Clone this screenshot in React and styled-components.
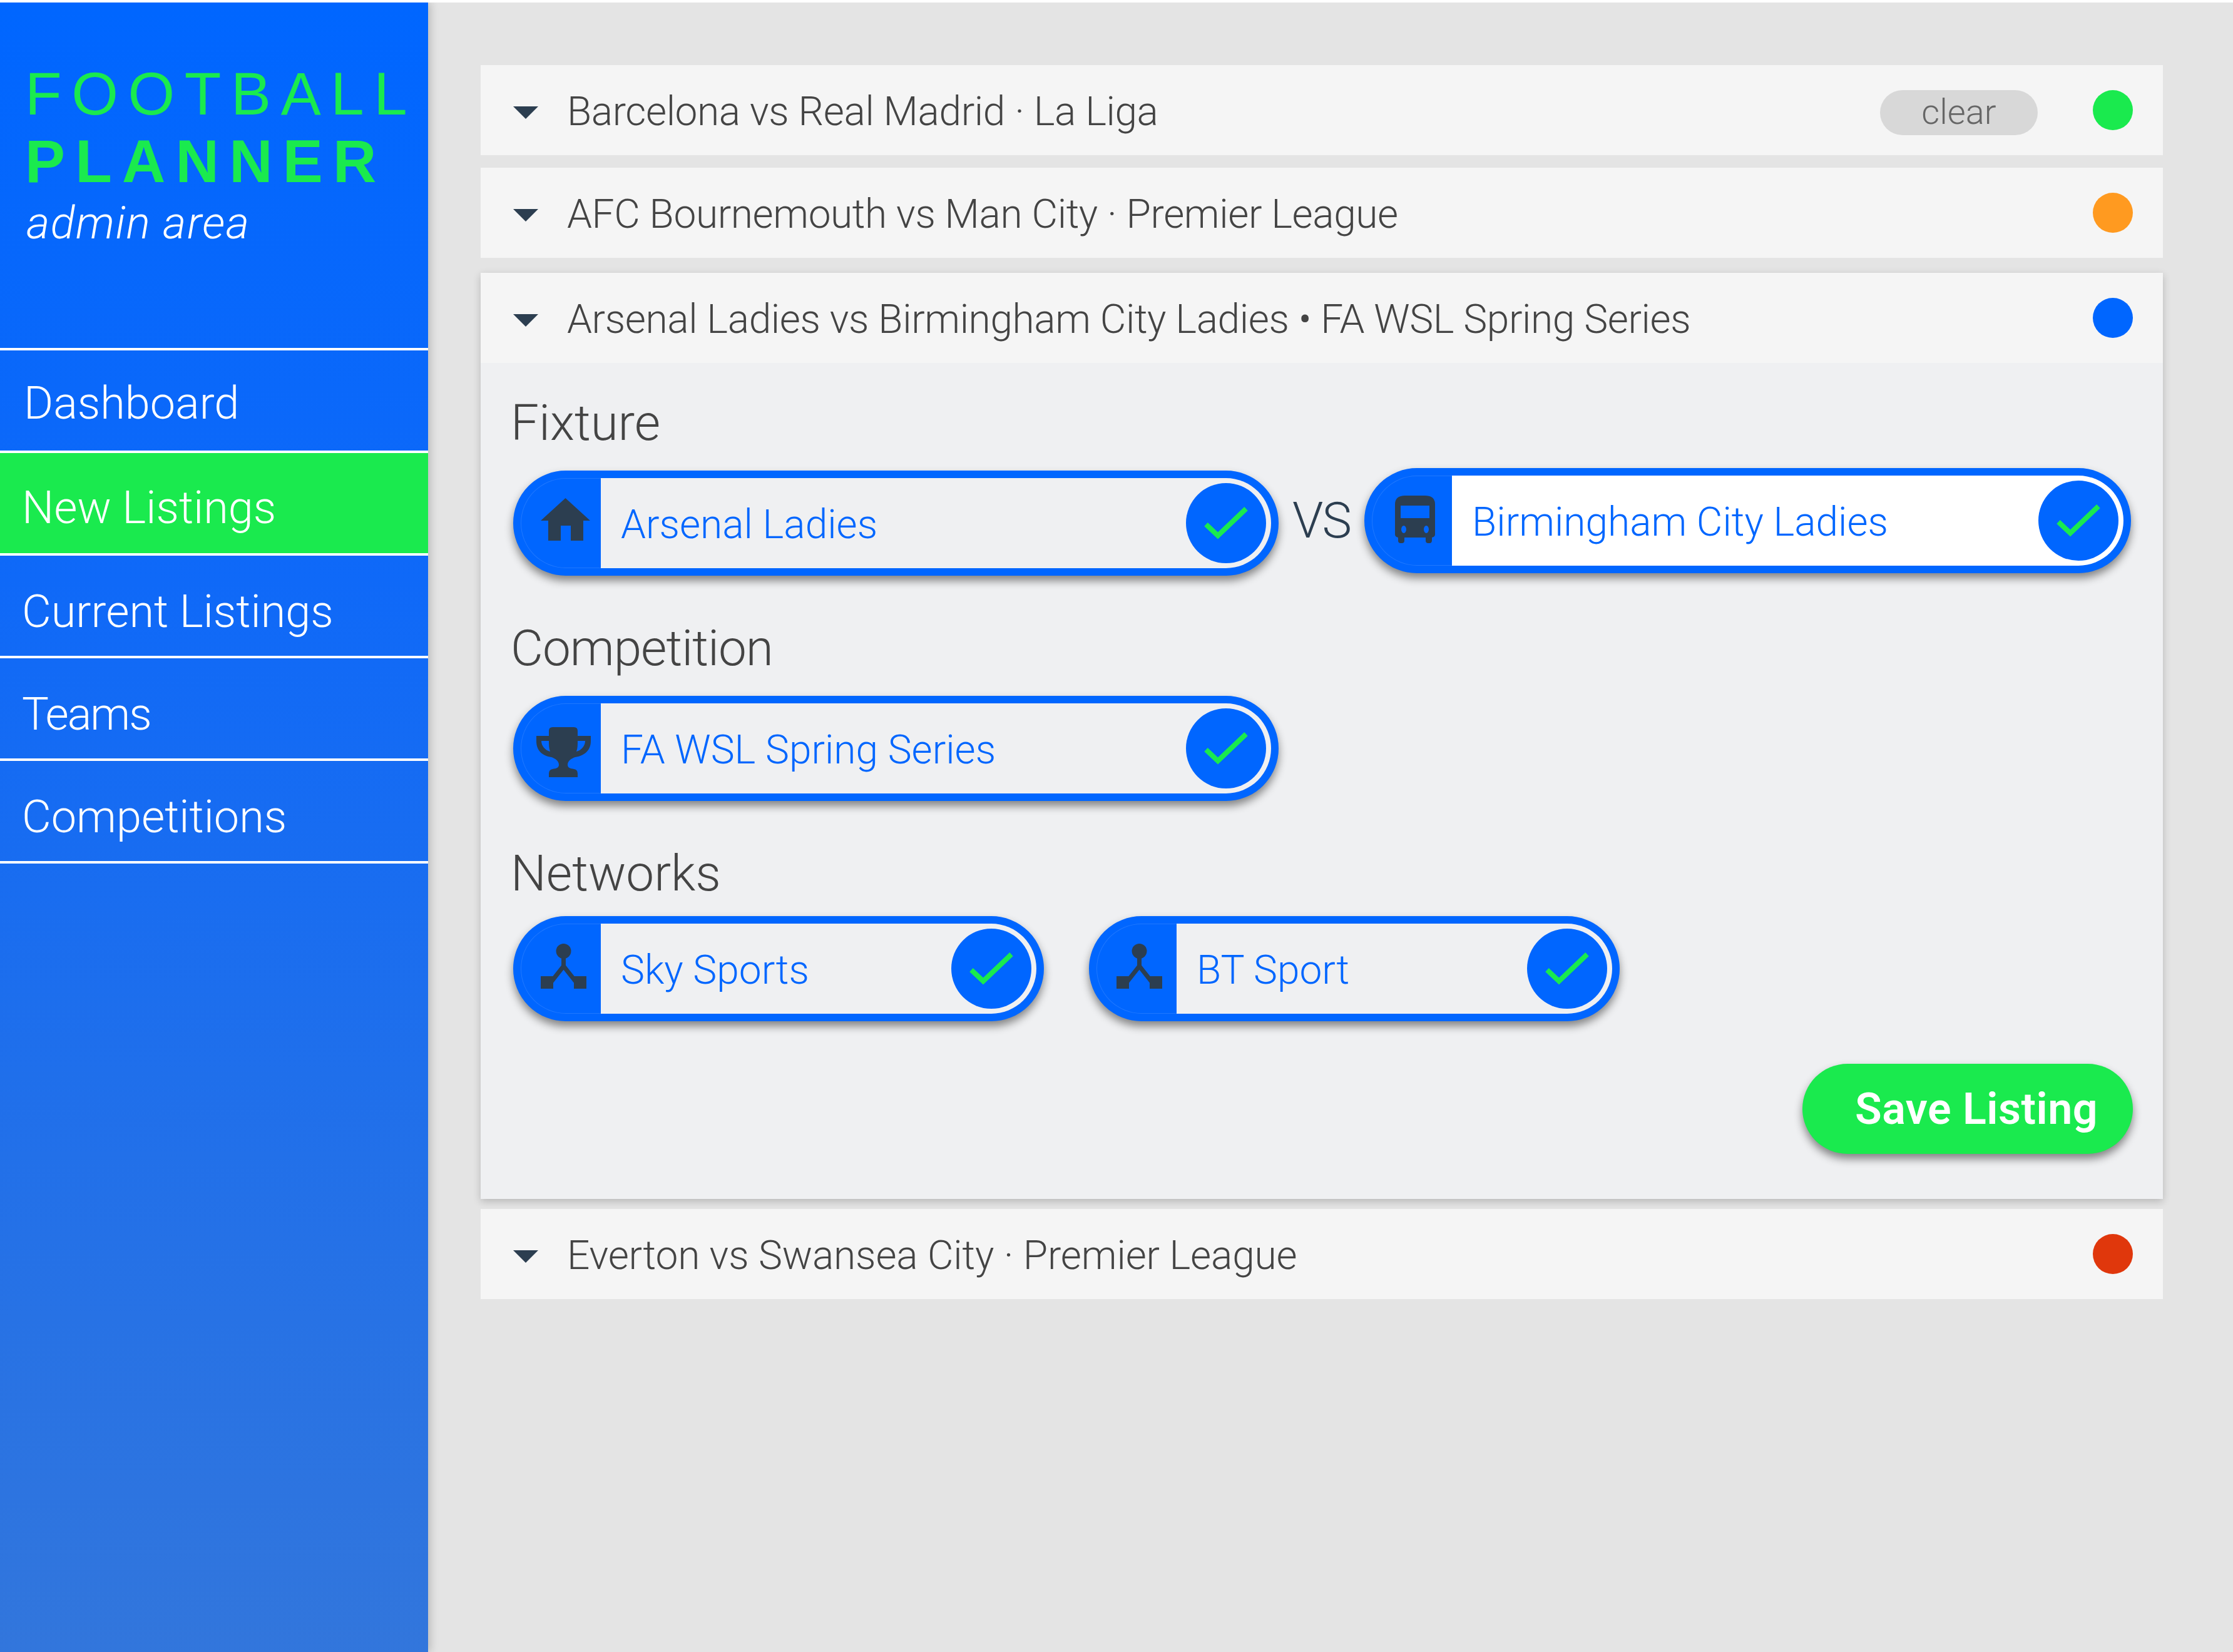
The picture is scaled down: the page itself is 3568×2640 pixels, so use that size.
import React from "react";
import styled, { createGlobalStyle } from "styled-components";

const Global = createGlobalStyle`
  html, body { margin: 0; padding: 0; background: #fff; }
  * { box-sizing: border-box; }
`;
const BLUE = "#0066ff";
const GREEN = "#1aea4e";
const DARK = "#2c3e50";
const FONT = `"Roboto", "Liberation Sans", sans-serif`;

const Page = styled.div`
  margin-top: 4px; height: 2636px; display: flex; background: #e4e4e4; font-family: ${FONT}; overflow: hidden;
`;
const Sidebar = styled.aside`
  width: 684px; flex: none; background: linear-gradient(180deg, #0066ff 0%, #0f69f8 35%, #3276dc 100%);
  box-shadow: 4px 0 12px rgba(0,0,0,.18);
`;
const Brand = styled.div`
  height: 552px; padding: 91px 0 0 40px;
`;
const BrandTop = styled.div`
  font: 400 96px/110px "Liberation Sans", sans-serif; color: ${GREEN}; letter-spacing: 15.6px; white-space: nowrap;
`;
const BrandBottom = styled.div`
  font: 700 96px/106px "Liberation Sans", sans-serif; color: ${GREEN}; letter-spacing: 16.2px;
`;
const BrandSub = styled.div`
  font: italic 300 72px/80px ${FONT}; color: #fff; margin-left: 2px; margin-top: 6px; letter-spacing: 1.4px;
`;
const NavItem = styled.div`
  height: 164px; border-top: 4px solid #fff; display: flex; align-items: center;
  padding: ${p => p.$top}px 0 0 ${p => p.$pad}px; font-size: 72px; font-weight: 300; color: #fff;
  letter-spacing: ${p => p.$ls || 0}px;
  background: ${p => (p.$active ? GREEN : "transparent")};
`;
const NavEnd = styled.div`border-top: 4px solid #fff;`;
const Main = styled.main`
  flex: 1; padding: 100px 112px 0 84px;
`;
const Row = styled.div`
  height: 144px; margin-top: ${p => p.$mt || 0}px; background: #f5f5f5; display: flex; align-items: center;
  padding: 0 48px 0 52px; font-size: 64px; font-weight: 300; color: #444;
`;
const Caret = styled.span`
  width: 0; height: 0; border-left: 20px solid transparent; border-right: 20px solid transparent;
  border-top: 20px solid ${DARK}; margin-right: 46px; margin-top: 8px;
`;
const RowText = styled.span`flex: 1; white-space: nowrap; letter-spacing: ${p => p.$ls ?? -0.4}px; margin-top: 4px;`;
const Clear = styled.span`
  width: 252px; height: 72px; border-radius: 36px; background: #d8d8d8; color: #666; font-size: 56px;
  display: flex; align-items: center; justify-content: center; margin-right: 88px; margin-top: 8px; padding-bottom: 2px;
`;
const Dot = styled.span`
  width: 64px; height: 64px; border-radius: 50%; background: ${p => p.$c};
`;
const Panel = styled.section`
  margin-top: 24px; background: #eff0f2; box-shadow: 0 4px 12px rgba(0,0,0,.2); height: 1480px;
`;
const PanelBody = styled.div`
  padding: 48px 48px 0 52px; display: flex; flex-direction: column;
`;
const Label = styled.div`
  font-size: 80px; line-height: 96px; font-weight: 300; color: #444; margin: ${p => p.$mt}px 0 0 -4px; height: ${p => p.$h}px;
  letter-spacing: ${p => p.$ls || 0}px;
`;
const PillRow = styled.div`
  display: flex; gap: ${p => p.$gap || 0}px;
`;
const Pill = styled.div`
  width: ${p => p.$w}px; height: 168px; border-radius: 84px; background: ${BLUE}; border: 12px solid ${BLUE};
  display: flex; box-shadow: 0 8px 14px rgba(0,0,0,.45); flex: none;
  position: relative; top: ${p => p.$shift || 0}px;
`;
const IconSlot = styled.div`
  width: 128px; flex: none; border: 1px solid rgba(255,255,255,.12); border-right: 0; border-radius: 72px 0 0 72px;
  display: flex; align-items: center; justify-content: center;
`;
const Glyph = styled.span`
  display: flex; margin: ${p => p.$dy * 2}px 0 0 ${p => p.$dx * 2}px;
`;
const PillBody = styled.div`
  flex: 1; background: ${p => (p.$white ? "#fff" : "#eff0f2")}; border-radius: 0 72px 72px 0;
  display: flex; align-items: center; justify-content: space-between; padding: 0 8px 0 32px;
  color: ${BLUE}; font-size: 64px; font-weight: 300; white-space: nowrap;
`;
const PillText = styled.span`margin-top: 4px;`;
const Tick = styled.div`
  width: 128px; height: 128px; border-radius: 50%; background: ${BLUE};
  display: flex; align-items: center; justify-content: center;
`;
const Vs = styled.div`
  width: 137px; flex: none; align-self: center; margin-bottom: 8px; text-align: center;
  font-size: 80px; font-weight: 300; color: ${DARK}; letter-spacing: -2px;
`;
const Footer = styled.div`
  display: flex; justify-content: flex-end; margin-top: 68px;
`;
const Save = styled.div`
  width: 528px; height: 144px; border-radius: 72px; background: ${GREEN}; color: #fff; font-size: 70px; font-weight: 600;
  padding-left: 84px; display: flex; align-items: center; box-shadow: 0 8px 14px rgba(0,0,0,.45); white-space: nowrap; letter-spacing: .5px;
`;

const Check = () => (
  <svg width="70" height="52" viewBox="0 0 70 52"><path d="M3 28 L22 46 L67 3" fill="none" stroke={GREEN} strokeWidth="8" /></svg>
);
const House = () => (
  <svg width="79" height="68" viewBox="0 0 79 68"><path fill={DARK} d="M39.5 0 L79 36 H68 V68 H48 V44 H32 V68 H12 V36 H0 Z" /></svg>
);
const Trophy = () => (
  <svg width="87" height="80" viewBox="0 0 87 80">
    <path fill={DARK} d="M20 6 Q20 0 26 0 H60 Q66 0 66 6 V14 H87 V22 C87 38 76 46 62 48 C56 50 50 54 50 60 C50 65 54 66 60 67 Q66 68 66 74 V80 H20 V74 Q20 68 26 67 C32 66 36 65 36 60 C36 54 30 50 24 48 C10 46 0 38 0 22 V14 H20 Z M8 22 C8 30 14 37 22 39 C20 34 20 28 20 22 Z M78 22 H66 C66 28 66 34 64 39 C72 37 78 30 78 22 Z" fillRule="evenodd" />
  </svg>
);
const Bus = () => (
  <svg width="64" height="76" viewBox="0 0 64 76">
    <path fill={DARK} fillRule="evenodd" d="M16 0 H48 Q64 0 64 14 V62 Q64 66 59 67 V72 Q59 76 55 76 H53 Q49 76 49 72 V67 H15 V72 Q15 76 11 76 H9 Q5 76 5 72 V67 Q0 66 0 62 V14 Q0 0 16 0 Z M9 16 V36 H55 V16 Z M14 48 A4 6 0 1 0 14 60 A4 6 0 1 0 14 48 Z M50 48 A4 6 0 1 0 50 60 A4 6 0 1 0 50 48 Z" />
  </svg>
);
const Net = () => (
  <svg width="73" height="72" viewBox="0 0 73 72">
    <ellipse cx="36.5" cy="12" rx="12" ry="12" fill={DARK} />
    <path d="M36.5 20 V36 M36.5 36 L16 62 M36.5 36 L57 62" stroke={DARK} strokeWidth="7" fill="none" />
    <rect x="0" y="52" width="20" height="20" fill={DARK} />
    <rect x="53" y="52" width="20" height="20" fill={DARK} />
  </svg>
);

const PillItem = ({ w, icon, dx, dy, text, white, shift }) => (
  <Pill $w={w} $shift={shift}>
    <IconSlot><Glyph $dx={dx} $dy={dy}>{icon}</Glyph></IconSlot>
    <PillBody $white={white}>
      <PillText>{text}</PillText>
      <Tick><Check /></Tick>
    </PillBody>
  </Pill>
);

const RowItem = ({ text, dot, clear, mt, ls }) => (
  <Row $mt={mt}>
    <Caret />
    <RowText $ls={ls}>{text}</RowText>
    {clear && <Clear>clear</Clear>}
    <Dot $c={dot} />
  </Row>
);

export default function App() {
  return (
    <Page>
      <Global />
      <Sidebar>
        <Brand>
          <BrandTop>FOOTBALL</BrandTop>
          <BrandBottom>PLANNER</BrandBottom>
          <BrandSub>admin area</BrandSub>
        </Brand>
        <NavItem $pad={38} $top={8}>Dashboard</NavItem>
        <NavItem $pad={35} $top={14} $active>New Listings</NavItem>
        <NavItem $pad={35} $top={18}>Current Listings</NavItem>
        <NavItem $pad={35} $top={18} $ls={-2}>Teams</NavItem>
        <NavItem $pad={35} $top={18}>Competitions</NavItem>
        <NavEnd />
      </Sidebar>
      <Main>
        <RowItem text="Barcelona vs Real Madrid · La Liga" dot="#1aea4e" clear />
        <RowItem mt={20} text="AFC Bournemouth vs Man City · Premier League" dot="#ff9a20" />
        <Panel>
          <RowItem text="Arsenal Ladies vs Birmingham City Ladies • FA WSL Spring Series" dot={BLUE} />
          <PanelBody>
            <Label $mt={0} $h={124}>Fixture</Label>
            <PillRow>
              <PillItem w={1223} icon={<House />} dx={7} dy={-6} text="Arsenal Ladies" />
              <Vs>VS</Vs>
              <PillItem w={1225} icon={<Bus />} dx={4} dy={-2} text="Birmingham City Ladies" white shift={-4} />
            </PillRow>
            <Label $mt={68} $h={124} $ls={-1}>Competition</Label>
            <PillRow><PillItem w={1223} icon={<Trophy />} dx={4} dy={6} text="FA WSL Spring Series" /></PillRow>
            <Label $mt={68} $h={116}>Networks</Label>
            <PillRow $gap={72}>
              <PillItem w={848} icon={<Net />} dx={4} dy={-4} text="Sky Sports" />
              <PillItem w={848} icon={<Net />} dx={4} dy={-4} text="BT Sport" />
            </PillRow>
            <Footer><Save>Save Listing</Save></Footer>
          </PanelBody>
        </Panel>
        <RowItem mt={16} ls={-0.15} text="Everton vs Swansea City · Premier League" dot="#e0370c" />
      </Main>
    </Page>
  );
}
